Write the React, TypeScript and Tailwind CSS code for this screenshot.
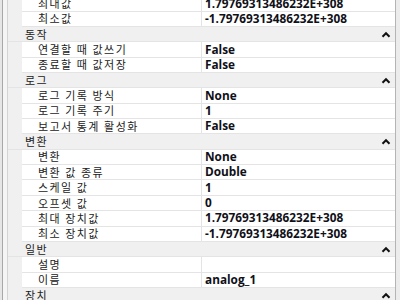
type Row =
  | { kind: "cat"; label: string }
  | { kind: "prop"; label: string; value: string };

const rows: Row[] = [
  { kind: "prop", label: "최대값", value: "1.79769313486232E+308" },
  { kind: "prop", label: "최소값", value: "-1.79769313486232E+308" },
  { kind: "cat", label: "동작" },
  { kind: "prop", label: "연결할 때 값쓰기", value: "False" },
  { kind: "prop", label: "종료할 때 값저장", value: "False" },
  { kind: "cat", label: "로그" },
  { kind: "prop", label: "로그 기록 방식", value: "None" },
  { kind: "prop", label: "로그 기록 주기", value: "1" },
  { kind: "prop", label: "보고서 통계 활성화", value: "False" },
  { kind: "cat", label: "변환" },
  { kind: "prop", label: "변환", value: "None" },
  { kind: "prop", label: "변환 값 종류", value: "Double" },
  { kind: "prop", label: "스케일 값", value: "1" },
  { kind: "prop", label: "오프셋 값", value: "0" },
  { kind: "prop", label: "최대 장치값", value: "1.79769313486232E+308" },
  { kind: "prop", label: "최소 장치값", value: "-1.79769313486232E+308" },
  { kind: "cat", label: "일반" },
  { kind: "prop", label: "설명", value: "" },
  { kind: "prop", label: "이름", value: "analog_1" },
  { kind: "cat", label: "장치" },
];

function Chevron() {
  return (
    <svg width="10" height="7" viewBox="0 0 10 7" className="mr-[4px] shrink-0">
      <path d="M1.5 5.8 L5 2.2 L8.5 5.8" fill="none" stroke="#111" strokeWidth="2" />
    </svg>
  );
}

export default function App() {
  return (
    <div className="flex w-[400px] h-[300px] overflow-hidden bg-white font-['Open_Sans','Noto_Sans_CJK_KR',sans-serif] text-[11px] leading-none">
      <div className="w-[8px] shrink-0 flex">
        <div className="w-[2px] bg-[#e6e6e6]" />
        <div className="w-[1px] bg-[#a8a8a8]" />
        <div className="w-[4px] bg-[#f5f5f5]" />
        <div className="w-[1px] bg-[#d4d4d4]" />
      </div>
      <div className="w-[387px] shrink-0 flex flex-col mt-[-3.65px]">
        {rows.map((r, i) =>
          r.kind === "cat" ? (
            <div key={i} className="h-[15.35px] shrink-0 flex items-center justify-between bg-[#f0f0f0] border-b border-[#e4e4e4] pl-[17px] text-[#222]">
              <span className="tracking-[1.4px]">{r.label}</span>
              <Chevron />
            </div>
          ) : (
            <div key={i} className="h-[15.35px] shrink-0 flex">
              <div className="w-[14px] bg-[#f0f0f0]" />
              <div className="w-[180px] flex items-center pl-[16px] border-b border-r border-[#e4e4e4] text-[#222] tracking-[1.4px] whitespace-nowrap">
                {r.label}
              </div>
              <div className="flex-1 flex items-center pl-[3px] border-b border-[#e4e4e4] font-bold text-[11.8px] text-[#101018]">
                {r.value}
              </div>
            </div>
          )
        )}
      </div>
      <div className="w-[5px] shrink-0 border-l border-[#b4b4b4] bg-[#ececec]" />
    </div>
  );
}
